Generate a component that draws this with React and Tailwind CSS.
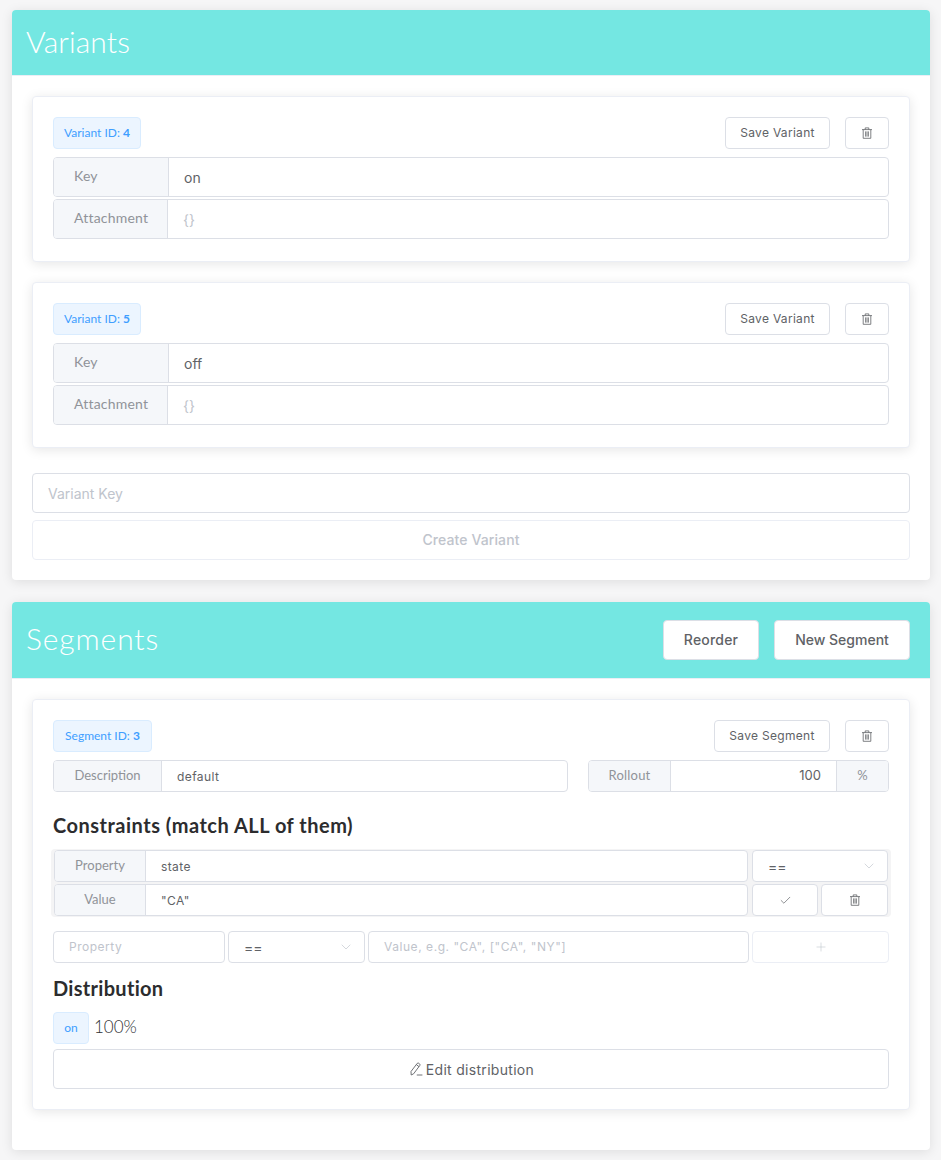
import React from "react";
import { Check, ChevronDown, Plus } from "lucide-react";

const AV = "font-['Lato','Noto_Sans',sans-serif]";
const IN = "font-['Inter','Noto_Sans',sans-serif]";

function Trash({ className = "" }) {
  return (
    <svg viewBox="0 0 12 12" fill="none" stroke="currentColor" strokeWidth="0.8" className={className}>
      <path d="M1 2.6h10M4.2 2.6V.9h3.6v1.7M2.2 2.6v8.7h7.6V2.6M4.6 4.4v5.2M6 4.4v5.2M7.4 4.4v5.2" />
    </svg>
  );
}

function Pencil() {
  return (
    <svg viewBox="0 0 13 14" fill="none" stroke="currentColor" strokeWidth="0.9" className="w-[13px] h-[14px]">
      <path d="M1 9.5 7.2 1.4c.5-.5 1.2-.5 1.7-.1l.7.6c.5.4.5 1.1.2 1.6L3.6 11.8 1.2 13zM6.4 2.6l2.6 2.1M6.8 13h5.6" />
    </svg>
  );
}

function Btn({ className = "", children }) {
  return (
    <div className={`flex items-center justify-center rounded-[4px] border border-[#dcdfe6] bg-white text-[#606266] ${IN} ${className}`}>
      {children}
    </div>
  );
}

function Tag({ className = "", children }) {
  return (
    <div className={`flex h-8 items-center justify-center rounded-[4px] border border-[#d9ecff] bg-[#ecf5ff] text-[12px] text-[#409eff] ${AV} ${className}`}>
      {children}
    </div>
  );
}

function Group({ label, labelW, value, placeholder, h = "h-10", size = "text-[14px]", labelClass = "justify-center text-[13px]", className = "" }) {
  return (
    <div className={`flex ${h} overflow-hidden rounded-[4px] border border-[#dcdfe6] bg-white ${className}`}>
      <div className={`flex shrink-0 items-center border-r border-[#dcdfe6] bg-[#f5f7fa] text-[#909399] ${AV} ${labelClass} ${labelW}`}>
        {label}
      </div>
      <div className={`flex flex-1 items-center pl-[15px] ${IN} ${size} ${placeholder ? "text-[#c0c4cc]" : "text-[#606266]"}`}>
        {placeholder || value}
      </div>
    </div>
  );
}

function VariantCard({ id, value }) {
  const lc = "justify-start pl-5 pb-[3px] text-[14px] tracking-[0.2px]";
  return (
    <div className="rounded-[4px] border border-[#ebeef5] bg-white px-5 pt-5 pb-[22px] shadow-[0_2px_12px_0_rgba(0,0,0,0.1)]">
      <div className="flex items-start">
        <Tag className="w-[88px]">
          <span>Variant ID: <b className="font-bold">{id}</b></span>
        </Tag>
        <Btn className="ml-auto h-8 w-[105px] text-[12px] tracking-[0.3px]">Save Variant</Btn>
        <Btn className="ml-[15px] h-8 w-11"><Trash className="w-3 h-3" /></Btn>
      </div>
      <Group className="mt-2" label="Key" labelW="w-[115px]" labelClass={lc} value={value} />
      <Group className="mt-0.5" label="Attachment" labelW="w-[114px]" labelClass={lc} placeholder="{}" />
    </div>
  );
}

export default function App() {
  const small = "pt-px text-[12px] tracking-[0.4px]";
  return (
    <div className="min-h-[1160px] bg-[#f6f6f7] pl-3 pr-[11px] pt-2.5 pb-2.5">
      <section className="overflow-hidden rounded-[4px] bg-white shadow-[0_2px_12px_0_rgba(0,0,0,0.1)]">
        <header className="flex h-[66px] items-center border-b border-[#ebeef5] bg-[#74e7e2] px-[14px] pb-1">
          <h2 className={`text-[30px] font-light leading-none tracking-[0.1px] text-white ${AV}`}>Variants</h2>
        </header>
        <div className="p-5">
          <VariantCard id={4} value="on" />
          <div className="mt-5"><VariantCard id={5} value="off" /></div>
          <div className={`mt-[25px] flex h-10 items-center rounded-[4px] border border-[#dcdfe6] pl-[15px] text-[14px] text-[#c0c4cc] ${IN}`}>Variant Key</div>
          <div className={`mt-[7px] flex h-10 items-center justify-center rounded-[4px] border border-[#ebeef5] pb-px text-[14px] font-medium tracking-[0.1px] text-[#c0c4cc] ${IN}`}>Create Variant</div>
        </div>
      </section>

      <section className="mt-[22px] overflow-hidden rounded-[4px] bg-white pb-10 shadow-[0_2px_12px_0_rgba(0,0,0,0.1)]">
        <header className="flex h-[77px] items-center border-b border-[#ebeef5] bg-[#74e7e2] pl-[14px] pr-5">
          <h2 className={`pb-1 text-[30px] font-light leading-none tracking-[0.9px] text-white ${AV}`}>Segments</h2>
          <Btn className="ml-auto h-10 w-[96px] pb-px text-[14px] font-medium tracking-[0.2px]">Reorder</Btn>
          <Btn className="ml-[15px] h-10 w-[136px] pb-px text-[14px] font-medium">New Segment</Btn>
        </header>
        <div className="px-5 pt-5">
          <div className="rounded-[4px] border border-[#ebeef5] bg-white px-5 pt-5 pb-5 shadow-[0_2px_12px_0_rgba(0,0,0,0.1)]">
            <div className="flex items-start">
              <Tag className="w-[99px]">
                <span>Segment ID: <b className="font-bold">3</b></span>
              </Tag>
              <Btn className="ml-auto h-8 w-[116px] text-[12px] tracking-[0.3px]">Save Segment</Btn>
              <Btn className="ml-[15px] h-8 w-11"><Trash className="w-3 h-3" /></Btn>
            </div>
            <div className="mt-2 flex justify-between">
              <Group className="w-[515px]" h="h-8" label="Description" labelW="w-[108px]" size={small} value="default" />
              <div className="flex h-8 w-[301px] overflow-hidden rounded-[4px] border border-[#dcdfe6]">
                <div className={`flex w-[82px] items-center justify-center border-r border-[#dcdfe6] bg-[#f5f7fa] text-[13px] tracking-[0.2px] text-[#909399] ${AV}`}>Rollout</div>
                <div className={`flex flex-1 items-center justify-end pr-[15px] text-[13px] text-[#606266] ${IN}`}>100</div>
                <div className={`flex w-[52px] items-center justify-center border-l border-[#dcdfe6] bg-[#f5f7fa] text-[13px] text-[#909399] ${AV}`}>%</div>
              </div>
            </div>

            <h3 className={`mt-5 text-[20px] font-bold leading-[26px] tracking-[0.5px] text-[#2c2c2e] ${AV}`}>Constraints (match ALL of them)</h3>

            <div className="mt-[11px] -mx-0.5 rounded-[4px] bg-[#f4f4f5] p-px px-[3px]">
              <div className="flex gap-1">
                <Group className="flex-1" h="h-8" label="Property" labelW="w-[91px]" size={small} value="state" />
                <div className={`flex h-8 w-[136px] items-center justify-between rounded-[4px] border border-[#dcdfe6] bg-white pl-[15px] pr-2.5 text-[14px] text-[#606266] ${IN}`}>
                  <span>==</span>
                  <ChevronDown className="h-4 w-4 text-[#c0c4cc]" strokeWidth={1} />
                </div>
              </div>
              <div className="mt-0.5 flex gap-1">
                <Group className="flex-1" h="h-8" label="Value" labelW="w-[91px]" size={small} value={'"CA"'} />
                <Btn className="h-8 w-[66px]"><Check className="h-[13px] w-[13px]" strokeWidth={1.3} /></Btn>
                <Btn className="-ml-px h-8 w-[67px]"><Trash className="h-3 w-3" /></Btn>
              </div>
            </div>

            <div className="mt-[14px] flex gap-[3px]">
              <div className={`flex h-8 w-[172px] items-center rounded-[4px] border border-[#dcdfe6] pl-[15px] text-[12px] tracking-[0.5px] text-[#c0c4cc] ${IN}`}>Property</div>
              <div className={`flex h-8 w-[137px] items-center justify-between rounded-[4px] border border-[#dcdfe6] pl-[15px] pr-2.5 text-[14px] text-[#606266] ${IN}`}>
                <span>==</span>
                <ChevronDown className="h-4 w-4 text-[#c0c4cc]" strokeWidth={1} />
              </div>
              <div className={`flex h-8 w-[381px] items-center rounded-[4px] border border-[#dcdfe6] pl-[15px] text-[12px] tracking-[0.55px] text-[#c0c4cc] ${IN}`}>{'Value, e.g. "CA", ["CA", "NY"]'}</div>
              <div className="flex h-8 flex-1 items-center justify-center rounded-[4px] border border-[#ebeef5] text-[#c0c4cc]">
                <Plus className="h-[14px] w-[14px]" strokeWidth={1} />
              </div>
            </div>

            <h3 className={`mt-[12px] text-[20px] font-bold leading-[26px] tracking-[0.3px] text-[#2c2c2e] ${AV}`}>Distribution</h3>

            <div className="mt-[11px] flex items-start">
              <Tag className="w-9">on</Tag>
              <span className={`ml-[5px] text-[17px] font-light leading-[30px] text-[#303133] ${AV}`}>100%</span>
            </div>
            <Btn className="mt-[5px] h-10 gap-[3px] pl-[2px] text-[14px] tracking-[0.3px]"><Pencil /> Edit distribution</Btn>
          </div>
        </div>
      </section>
    </div>
  );
}
